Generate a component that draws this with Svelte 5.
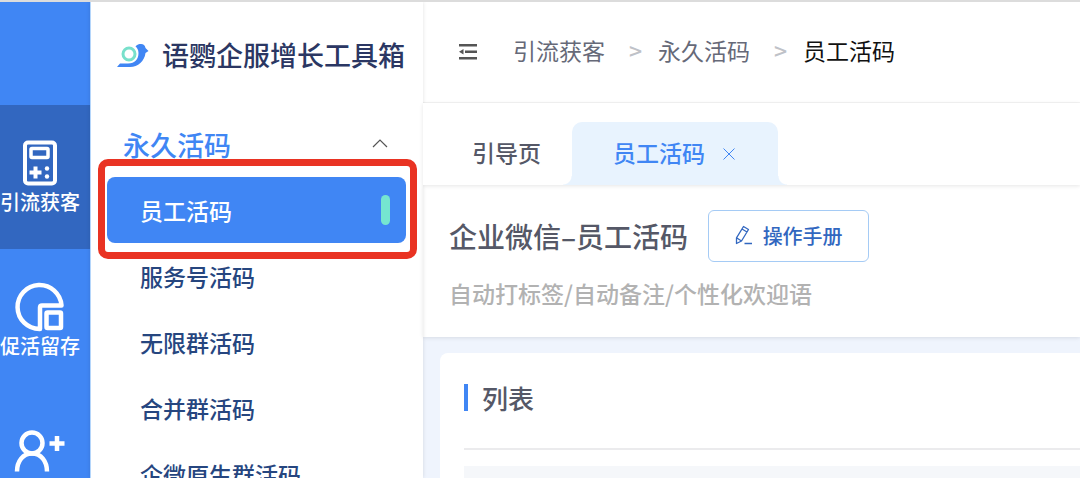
<script lang="ts">
  const menu = ["员工活码", "服务号活码", "无限群活码", "合并群活码", "企微原生群活码"];
  const crumbs = ["引流获客", "永久活码", "员工活码"];

  let current = $state("员工活码");
  let open = $state(true);
  let section = $state("acquire");
</script>

<div class="app">
  <nav class="rail" aria-label="主导航">
    <button type="button" class="rail-item" class:active={section === "acquire"} onclick={() => (section = "acquire")}>
      <svg viewBox="0 0 48 48" fill="none" stroke="currentColor" aria-hidden="true">
        <rect x="9" y="3.5" width="30" height="41" rx="3" stroke-width="4" />
        <rect x="15" y="9.5" width="17" height="9" rx="1" stroke-width="3.5" />
        <path d="M19.5 27.5v12M13.5 33.5h12" stroke-width="4" />
        <circle cx="31" cy="29.5" r="2.2" fill="currentColor" stroke="none" />
        <circle cx="31" cy="37.5" r="2.2" fill="currentColor" stroke="none" />
      </svg>
      <span>引流获客</span>
    </button>
    <button type="button" class="rail-item" class:active={section === "retain"} onclick={() => (section = "retain")}>
      <svg viewBox="0 0 48 48" fill="none" stroke="currentColor" aria-hidden="true">
        <path d="M45.5 22.5A22 22 0 1 0 23.5 46H24V24.5Q24 22.5 26 22.5Z" stroke-width="4.5" stroke-linejoin="round" />
        <rect x="30.5" y="29.5" width="14.5" height="15.5" rx="1" stroke-width="4.5" />
      </svg>
      <span>促活留存</span>
    </button>
    <button type="button" class="rail-item" aria-label="客户" onclick={() => (section = "customers")}>
      <svg viewBox="0 0 48 48" fill="none" stroke="currentColor" aria-hidden="true">
        <circle cx="16" cy="16" r="10.5" stroke-width="4.5" />
        <path d="M1 44.5C1 34 7 26.5 16 26.5S31 34 31 44.5" stroke-width="4.5" />
        <path d="M41 9v15M33.5 16.5h15" stroke-width="4.5" />
      </svg>
    </button>
  </nav>

  <aside class="sidebar">
    <div class="brand">
      <svg viewBox="0 0 32 24" aria-hidden="true">
        <circle cx="12" cy="11" r="6" fill="none" stroke="#78e0cb" stroke-width="3" />
        <path
          d="M0 24 3 20.5H11C18 20.5 21.5 16 21.5 10 21.5 7 20 4.5 18.5 3.5 20 1.500 22 1 24 1 26.500 1 28 2.500 28.500 5L31.500 8 28.500 10C27.500 18 21 24 13 24Z"
          fill="#4086f4"
        />
      </svg>
      <span>语鹦企服增长工具箱</span>
    </div>

    <button type="button" class="group" aria-expanded={open} onclick={() => (open = !open)}>
      <span>永久活码</span>
      <svg viewBox="0 0 16 10" fill="none" stroke="currentColor" aria-hidden="true">
        <path d="M1 9 8 2l7 7" stroke-width="1.2" />
      </svg>
    </button>

    {#if open}
      <ul class="menu">
        {#each menu as item}
          <li class:selected={current === item}>
            <a href="#{item}" onclick={() => (current = item)}>{item}</a>
          </li>
        {/each}
      </ul>
    {/if}
  </aside>

  <main class="main">
    <header class="topbar">
      <button type="button" class="fold" aria-label="收起菜单">
        <svg viewBox="0 0 18 16" fill="currentColor" aria-hidden="true">
          <path d="M0 0h18v2.5H0zM6 6.500h12V9H6zM0 13h18v2.500H0zM0 7.700 4.500 5v5.500z" />
        </svg>
      </button>
      <nav class="crumbs" aria-label="面包屑">
        {#each crumbs as crumb, i}
          {#if i > 0}<span class="sep">&gt;</span>{/if}
          <a href="#{crumb}" class:last={i === crumbs.length - 1}>{crumb}</a>
        {/each}
      </nav>
    </header>

    <div class="tabs">
      <button type="button" class="tab">引导页</button>
      <div class="tab active">
        <button type="button" class="tab-name">员工活码</button>
        <button type="button" class="close" aria-label="关闭">
          <svg viewBox="0 0 12 12" fill="none" stroke="currentColor" aria-hidden="true">
            <path d="m.5.5 11 11m0-11-11 11" />
          </svg>
        </button>
      </div>
    </div>

    <section class="intro">
      <div class="intro-head">
        <h1>企业微信–员工活码</h1>
        <button type="button" class="manual">
          <svg viewBox="0 0 18 20" fill="none" stroke="currentColor" stroke-width="1.3" stroke-linejoin="round" aria-hidden="true">
            <path d="M8.5 1.5 13.5 4.5 6.5 16 1.5 18.5 1.5 12.8ZM7 4l5 3M1.5 12.8l5 3.2M9.5 18.5H17" />
          </svg>
          操作手册
        </button>
      </div>
      <p>自动打标签/自动备注/个性化欢迎语</p>
    </section>

    <section class="card">
      <h2>列表</h2>
      <div class="table-head"></div>
    </section>
  </main>
</div>

<style>
  :global(body) {
    margin: 0;
  }
  .app {
    box-sizing: border-box;
    display: flex;
    height: 100vh;
    overflow: hidden;
    border-top: 2px solid #dcdcdc;
    background: #fff;
    font-family: "Noto Sans CJK SC", sans-serif;
    color: #555867;
  }
  button {
    padding: 0;
    border: none;
    background: none;
    font: inherit;
    color: inherit;
    cursor: pointer;
  }
  a {
    color: inherit;
    text-decoration: none;
  }
  svg {
    display: block;
    flex: none;
  }

  .rail {
    flex: none;
    width: 90px;
    padding-top: 103px;
    background: #4086f4;
    color: #fff;
  }
  .rail-item {
    display: flex;
    flex-direction: column;
    align-items: flex-start;
    gap: 1px;
    box-sizing: border-box;
    width: 100%;
    height: 144px;
    padding-top: 34px;
    font-size: 20px;
    font-weight: 500;
    line-height: 28px;
    white-space: nowrap;
  }
  .rail-item svg {
    width: 48px;
    height: 48px;
    margin-left: 16px;
    overflow: visible;
  }
  .rail-item.active {
    background: #3267c0;
  }

  .sidebar {
    flex: none;
    box-sizing: border-box;
    width: 333px;
    border-left: 1px solid #b5d6fb;
    box-shadow: 0 0 4px rgba(0, 0, 0, 0.12);
    z-index: 1;
  }
  .brand {
    display: flex;
    align-items: center;
    gap: 13px;
    height: 106px;
    padding-left: 26px;
    font-size: 27px;
    font-weight: 500;
    line-height: 36px;
    color: #2b3763;
    white-space: nowrap;
  }
  .brand svg {
    width: 32px;
    height: 24px;
  }
  .group {
    display: flex;
    align-items: center;
    justify-content: space-between;
    width: 100%;
    height: 69px;
    padding: 0 35px 0 32px;
    font-size: 27px;
    font-weight: 500;
    color: #4086f4;
  }
  .group span {
    padding-top: 4px;
  }
  .group svg {
    width: 16px;
    height: 10px;
    color: #555;
  }
  .menu {
    margin: 0;
    padding: 0 17px 0 16px;
    list-style: none;
  }
  .menu li {
    position: relative;
  }
  .menu a {
    display: flex;
    align-items: center;
    justify-content: space-between;
    height: 66px;
    padding: 0 16px 0 33px;
    border-radius: 8px;
    font-size: 23px;
    font-weight: 500;
    color: #26467f;
    white-space: nowrap;
  }
  .menu .selected a {
    background: #4086f4;
    color: #fff;
  }
  .menu .selected a::after {
    content: "";
    width: 9px;
    height: 30px;
    border-radius: 5px;
    background: #75e6d0;
  }
  /* highlight frame round the selected entry */
  .menu .selected::before {
    content: "";
    position: absolute;
    inset: -18px -11px -16px -9px;
    border: 7px solid #e93323;
    border-radius: 10px;
    pointer-events: none;
  }

  .main {
    flex: 1;
    display: flex;
    flex-direction: column;
    min-width: 0;
    background: #eff4fd;
  }
  .topbar {
    flex: none;
    display: flex;
    align-items: center;
    height: 100px;
    padding-left: 36px;
    border-bottom: 1px solid #f4f4f4;
    background: #fff;
  }
  .fold svg {
    width: 18px;
    height: 16px;
    color: #555;
  }
  .crumbs {
    display: flex;
    align-items: center;
    margin-left: 36px;
    padding-bottom: 4px;
    font-size: 23px;
    color: #666978;
    white-space: nowrap;
  }
  .crumbs .sep {
    width: 53px;
    padding-left: 8px;
    box-sizing: border-box;
    text-align: center;
    font-weight: 500;
    color: #bfc2c8;
  }
  .crumbs .last {
    color: #111;
  }

  .tabs {
    flex: none;
    display: flex;
    align-items: flex-end;
    height: 82px;
    padding-left: 49px;
    background: #fff;
    font-size: 23px;
    font-weight: 500;
    z-index: 1;
    box-shadow: 0 1px 4px rgba(0, 0, 0, 0.1);
  }
  .tab {
    box-sizing: border-box;
    height: 63px;
    padding-bottom: 4px;
    white-space: nowrap;
  }
  .tab.active {
    position: relative;
    display: flex;
    align-items: center;
    gap: 18px;
    margin-left: 31px;
    padding: 0 43px 0 41px;
    border-radius: 10px 10px 0 0;
    background: #e8f3fe;
    color: #4086f4;
  }
  .tab-name {
    padding-bottom: 4px;
  }
  .tab.active::before,
  .tab.active::after {
    content: "";
    position: absolute;
    bottom: 0;
    width: 9px;
    height: 9px;
  }
  .tab.active::before {
    right: 100%;
    background: radial-gradient(circle at 0 0, transparent 8px, #e8f3fe 9px);
  }
  .tab.active::after {
    left: 100%;
    background: radial-gradient(circle at 100% 0, transparent 8px, #e8f3fe 9px);
  }
  .close svg {
    width: 12px;
    height: 12px;
  }

  .intro {
    flex: none;
    padding: 25px 26px;
    background: #fff;
    box-shadow: 0 1px 4px rgba(0, 0, 0, 0.1);
  }
  .intro-head {
    display: flex;
    align-items: center;
    gap: 20px;
  }
  h1 {
    margin: 0;
    font-size: 28px;
    font-weight: 500;
    white-space: nowrap;
  }
  .manual {
    display: flex;
    align-items: center;
    justify-content: center;
    gap: 10px;
    box-sizing: border-box;
    width: 161px;
    height: 52px;
    padding-bottom: 2px;
    border: 1px solid #a5cbf5;
    border-radius: 6px;
    font-size: 20px;
    font-weight: 500;
    color: #3267c0;
  }
  .manual svg {
    width: 18px;
    height: 20px;
  }
  .intro p {
    margin: 16px 0 0;
    padding-bottom: 4px;
    font-size: 23px;
    font-weight: 500;
    line-height: 30px;
    color: #b2b2b2;
    white-space: nowrap;
  }

  .card {
    flex: 1 0 auto;
    margin: 16px 0 0 17px;
    padding-left: 24px;
    border-radius: 8px 0 0 0;
    background: #fff;
  }
  h2 {
    display: flex;
    align-items: center;
    gap: 14px;
    box-sizing: border-box;
    height: 97px;
    margin: 0;
    padding-bottom: 6px;
    border-bottom: 2px solid #ebebed;
    font-size: 26px;
    font-weight: 500;
    line-height: 28px;
  }
  h2::before {
    content: "";
    width: 4px;
    height: 27px;
    background: #4086f4;
  }
  .table-head {
    height: 60px;
    margin-top: 16px;
    background: #f5f7fa;
  }
</style>
